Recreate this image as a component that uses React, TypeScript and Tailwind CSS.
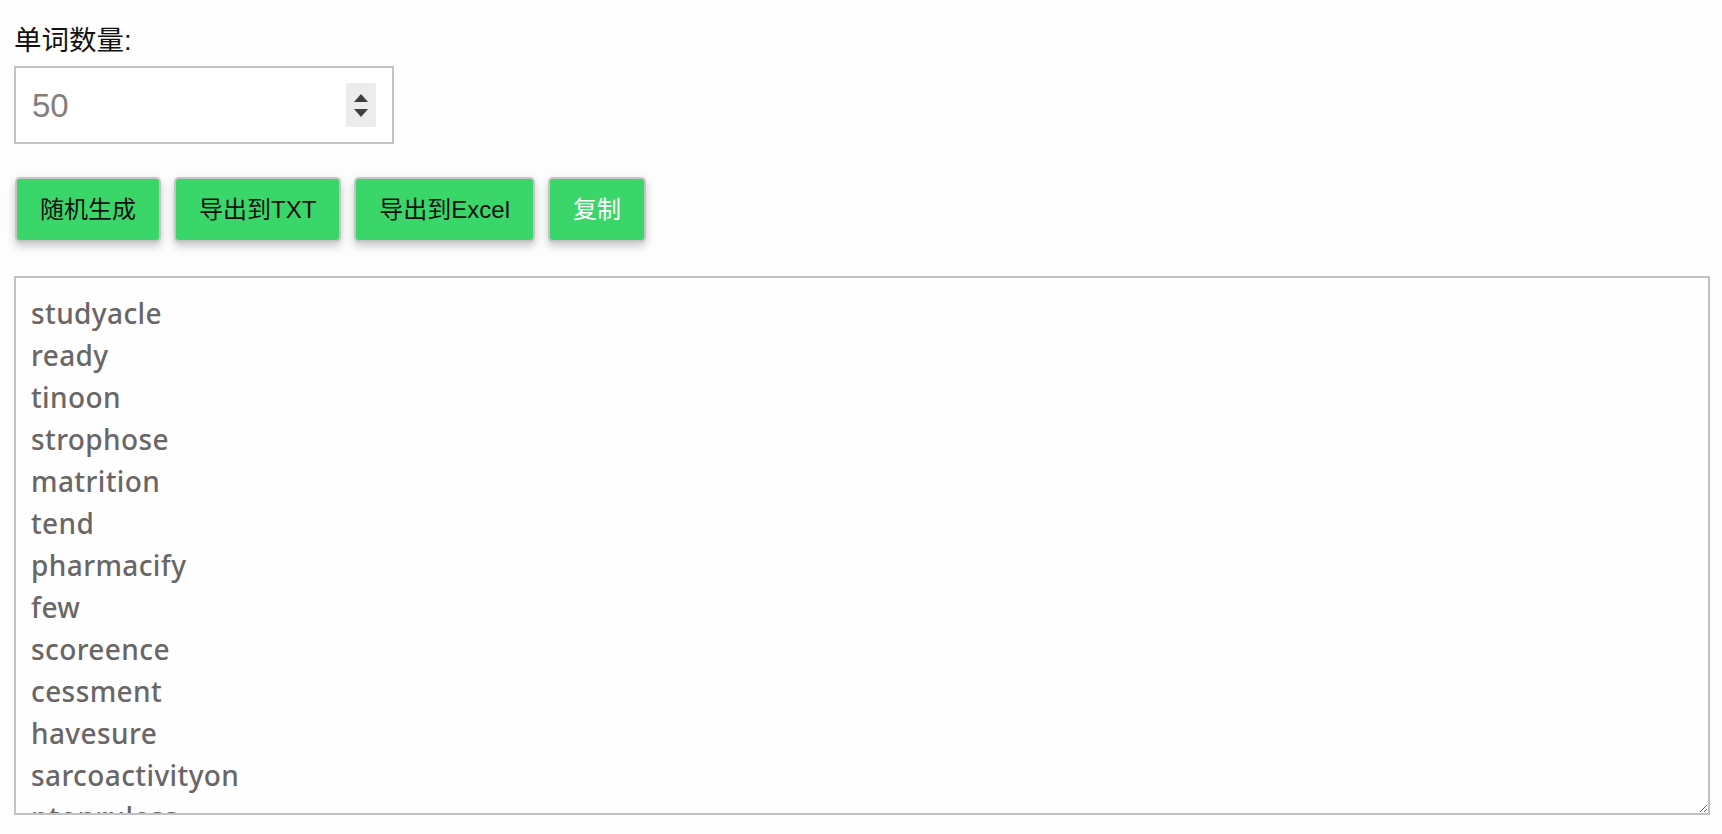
import React from "react";

const words = [
  "studyacle",
  "ready",
  "tinoon",
  "strophose",
  "matrition",
  "tend",
  "pharmacify",
  "few",
  "scoreence",
  "cessment",
  "havesure",
  "sarcoactivityon",
  "ptonruless",
  "guardment",
  "relation",
  "minisure",
  "holdful",
  "wonderish",
  "quickness",
  "platetion",
  "soundly",
  "overture",
  "kindest",
  "metaphorm",
  "lightway",
  "barrel",
  "cohension",
  "tracture",
  "nightful",
  "ambient",
  "strandle",
  "prement",
  "voicery",
  "gravity",
  "lumenous",
  "antiform",
  "shaded",
  "winsure",
  "craftion",
  "mellow",
  "pathology",
  "rivering",
  "subtract",
  "clamber",
  "hostess",
  "bracket",
  "fairment",
  "deepen",
  "stately",
  "orbiton",
];

const btnBase =
  "h-[65px] px-[23px] rounded-[5px] border-2 border-[#c4c4c4] bg-[#3ad66a] text-[24px] leading-none shadow-[0_4px_8px_rgba(0,0,0,0.22)] [font-family:'Liberation_Sans','Noto_Sans_CJK_SC',sans-serif]";

export default function App() {
  return (
    <div className="min-h-[834px] w-full bg-[#fdfdfd] pl-[14px] pr-[12px] pt-[24px]">
      <div className="text-[27.5px] leading-[34px] text-[#111] [font-family:'Liberation_Sans','Noto_Sans_CJK_SC',sans-serif]">
        单词数量:
      </div>
      <div className="mt-[8px] flex h-[78px] w-[380px] items-center border-2 border-[#c2c2c2] bg-white pl-[16px] pr-[16px]">
        <span className="flex-1 text-[33px] leading-none text-[#857c7c] [font-family:'Liberation_Sans',sans-serif]">
          50
        </span>
        <div className="flex h-[44px] w-[30px] flex-col items-center justify-center gap-[7px] rounded-[2px] bg-[#ececec]">
          <svg width="14" height="8" viewBox="0 0 14 8">
            <polygon points="7,0 14,8 0,8" fill="#3f3f3f" />
          </svg>
          <svg width="14" height="8" viewBox="0 0 14 8">
            <polygon points="0,0 14,0 7,8" fill="#3f3f3f" />
          </svg>
        </div>
      </div>
      <div className="ml-[1px] mt-[33px] flex gap-[13px]">
        <button className={`${btnBase} text-[#111]`}>随机生成</button>
        <button className={`${btnBase} text-[#111]`}>导出到TXT</button>
        <button className={`${btnBase} text-[#111]`}>导出到Excel</button>
        <button className={`${btnBase} text-white`}>复制</button>
      </div>
      <textarea
        readOnly
        value={words.join("\n")}
        className="mt-[34px] block h-[539px] w-[1696px] resize overflow-hidden border-2 border-[#c2c2c2] bg-[#fefefe] px-[15px] pt-[14px] text-[28px] leading-[42px] tracking-[0.4px] font-medium text-[#6a6666] outline-none [font-family:'Noto_Sans',sans-serif]"
      />
    </div>
  );
}
